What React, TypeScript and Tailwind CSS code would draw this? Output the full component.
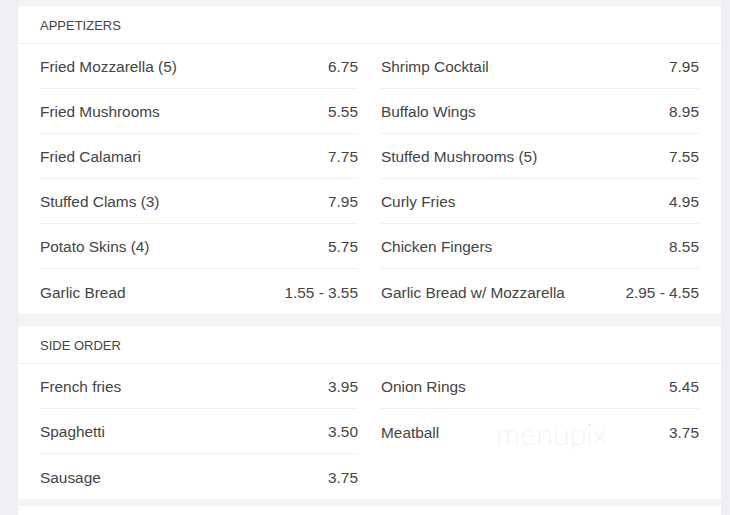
type Item = { name: string; price: string };

const appetizers: [Item[], Item[]] = [
  [
    { name: "Fried Mozzarella (5)", price: "6.75" },
    { name: "Fried Mushrooms", price: "5.55" },
    { name: "Fried Calamari", price: "7.75" },
    { name: "Stuffed Clams (3)", price: "7.95" },
    { name: "Potato Skins (4)", price: "5.75" },
    { name: "Garlic Bread", price: "1.55 - 3.55" },
  ],
  [
    { name: "Shrimp Cocktail", price: "7.95" },
    { name: "Buffalo Wings", price: "8.95" },
    { name: "Stuffed Mushrooms (5)", price: "7.55" },
    { name: "Curly Fries", price: "4.95" },
    { name: "Chicken Fingers", price: "8.55" },
    { name: "Garlic Bread w/ Mozzarella", price: "2.95 - 4.55" },
  ],
];

const sides: [Item[], Item[]] = [
  [
    { name: "French fries", price: "3.95" },
    { name: "Spaghetti", price: "3.50" },
    { name: "Sausage", price: "3.75" },
  ],
  [
    { name: "Onion Rings", price: "5.45" },
    { name: "Meatball", price: "3.75" },
  ],
];

function Column({ items, rows }: { items: Item[]; rows: number }) {
  return (
    <div className="flex flex-col">
      {items.map((it, i) => (
        <div
          key={it.name}
          className={`flex h-[45px] items-center justify-between pt-[2px] ${
            i < rows - 1 && i < items.length - 1 ? "border-b border-[#efeff1]" : ""
          }`}
        >
          <span>{it.name}</span>
          <span>{it.price}</span>
        </div>
      ))}
    </div>
  );
}

function Section({
  title,
  cols,
  children,
}: {
  title: string;
  cols: [Item[], Item[]];
  children?: React.ReactNode;
}) {
  const rows = Math.max(cols[0].length, cols[1].length);
  return (
    <section className="relative bg-white">
      <div className="flex h-[38px] items-center border-b border-[#efeff1] px-[22px] pt-[2px] text-[13px] uppercase text-[#444]">
        {title}
      </div>
      <div className="grid grid-cols-2 gap-x-[23px] px-[22px] text-[15.4px] text-[#444]">
        <Column items={cols[0]} rows={rows} />
        <Column items={cols[1]} rows={rows} />
      </div>
      {children}
    </section>
  );
}

export default function App() {
  return (
    <div
      className="h-[515px] overflow-hidden bg-[#eeeef3] pl-[18px]"
      style={{ fontFamily: '"Liberation Sans", Arial, sans-serif' }}
    >
      <div className="flex h-full w-[703px] flex-col bg-[#f4f4f6] pt-[6px]">
        <Section title="Appetizers" cols={appetizers} />
        <div className="mt-[12px]">
          <Section title="Side Order" cols={sides}>
            <span
              className="absolute left-[478px] top-[85px] text-[30px] tracking-[0.5px] text-[#d9d9d9]"
              style={{ fontFamily: "Lato, sans-serif", fontWeight: 100 }}
            >
              menupix
            </span>
          </Section>
        </div>
        <div className="mt-[7px] flex-1 bg-white" />
      </div>
    </div>
  );
}
